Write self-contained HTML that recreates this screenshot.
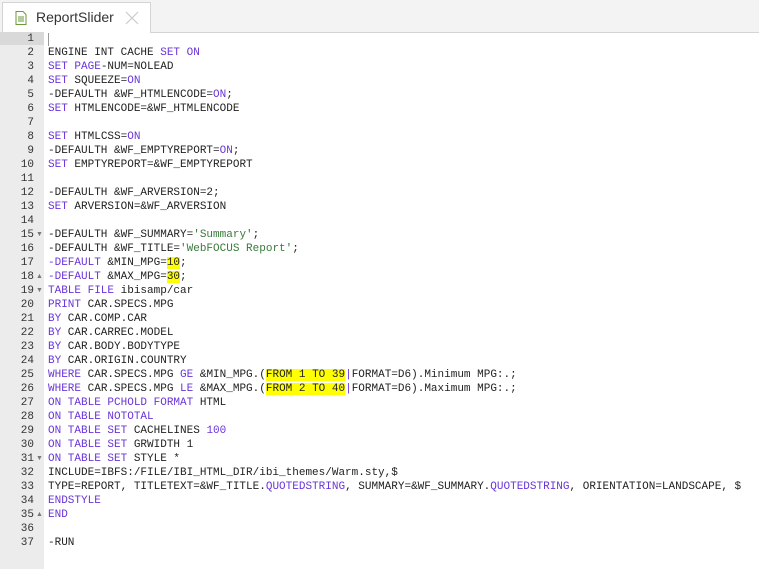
<!DOCTYPE html>
<html><head><meta charset="utf-8"><style>
body{margin:0;width:759px;height:569px;overflow:hidden;background:#fff;font-family:"Liberation Sans",sans-serif}
.bar{position:absolute;left:0;top:0;width:759px;height:32px;background:#f3f3f3;border-bottom:1px solid #d4d4d4}
.tab{position:absolute;left:2px;top:2px;width:149px;height:31px;background:#fff;border:1px solid #d4d4d4;border-bottom:none;box-sizing:border-box}
.tab .t{position:absolute;left:33px;top:6px;font-size:14px;color:#333}
.gut{position:absolute;left:0;top:33px;width:44px;height:536px;background:#ececec}
.hl{position:absolute;left:0;top:32px;width:44px;height:13px;background:#d9d9d9}
pre{margin:0;position:absolute;top:32px;font-family:"Liberation Mono",monospace;font-size:11px;line-height:14px;color:#222}
.n{left:0;width:34px;text-align:right;color:#333}
.c{left:48px;letter-spacing:0}
.k{color:#6a35d8}.s{color:#3a7a3a}.y{background:#ffff00}
.cur{position:absolute;left:48px;top:33px;width:1px;height:13px;background:#999}
.ar{position:absolute;left:36px;font-size:7px;color:#777}
</style></head><body>
<div class="bar"><div class="tab">
<svg style="position:absolute;left:12px;top:8px" width="12" height="14" viewBox="0 0 12 14"><path d="M1 .5h7l3 3v10H1z" fill="#fff" stroke="#6a9a3a"/><path d="M3 6h6M3 8h6M3 10h6" stroke="#6a9a3a"/></svg>
<span class="t">ReportSlider</span>
<svg style="position:absolute;left:122px;top:8px" width="14" height="14"><path d="M1 1l12 12M13 1L1 13" stroke="#ccc" stroke-width="1.2"/></svg>
</div></div>
<div class="gut"></div><div class="hl"></div><div class="cur"></div>
<pre class="n">1
2
3
4
5
6
7
8
9
10
11
12
13
14
15
16
17
18
19
20
21
22
23
24
25
26
27
28
29
30
31
32
33
34
35
36
37</pre>
<span class="ar" style="top:231px">▼</span><span class="ar" style="top:273px">▲</span><span class="ar" style="top:287px">▼</span><span class="ar" style="top:455px">▼</span><span class="ar" style="top:511px">▲</span>
<pre class="c">

ENGINE INT CACHE <span class="k">SET ON</span>
<span class="k">SET PAGE</span>-NUM=NOLEAD
<span class="k">SET</span> SQUEEZE=<span class="k">ON</span>
-DEFAULTH &amp;WF_HTMLENCODE=<span class="k">ON</span>;
<span class="k">SET</span> HTMLENCODE=&amp;WF_HTMLENCODE

<span class="k">SET</span> HTMLCSS=<span class="k">ON</span>
-DEFAULTH &amp;WF_EMPTYREPORT=<span class="k">ON</span>;
<span class="k">SET</span> EMPTYREPORT=&amp;WF_EMPTYREPORT

-DEFAULTH &amp;WF_ARVERSION=2;
<span class="k">SET</span> ARVERSION=&amp;WF_ARVERSION

-DEFAULTH &amp;WF_SUMMARY=<span class="s">'Summary'</span>;
-DEFAULTH &amp;WF_TITLE=<span class="s">'WebFOCUS Report'</span>;
<span class="k">-DEFAULT</span> &amp;MIN_MPG=<span class="y">10</span>;
<span class="k">-DEFAULT</span> &amp;MAX_MPG=<span class="y">30</span>;
<span class="k">TABLE FILE</span> ibisamp/car
<span class="k">PRINT</span> CAR.SPECS.MPG
<span class="k">BY</span> CAR.COMP.CAR
<span class="k">BY</span> CAR.CARREC.MODEL
<span class="k">BY</span> CAR.BODY.BODYTYPE
<span class="k">BY</span> CAR.ORIGIN.COUNTRY
<span class="k">WHERE</span> CAR.SPECS.MPG <span class="k">GE</span> &amp;MIN_MPG.(<span class="y">FROM 1 TO 39</span><span class="k">|</span>FORMAT=D6).Minimum MPG:.;
<span class="k">WHERE</span> CAR.SPECS.MPG <span class="k">LE</span> &amp;MAX_MPG.(<span class="y">FROM 2 TO 40</span><span class="k">|</span>FORMAT=D6).Maximum MPG:.;
<span class="k">ON TABLE PCHOLD FORMAT</span> HTML
<span class="k">ON TABLE NOTOTAL</span>
<span class="k">ON TABLE SET</span> CACHELINES <span class="k">100</span>
<span class="k">ON TABLE SET</span> GRWIDTH 1
<span class="k">ON TABLE SET</span> STYLE *
INCLUDE=IBFS:/FILE/IBI_HTML_DIR/ibi_themes/Warm.sty,$
TYPE=REPORT, TITLETEXT=&amp;WF_TITLE.<span class="k">QUOTEDSTRING</span>, SUMMARY=&amp;WF_SUMMARY.<span class="k">QUOTEDSTRING</span>, ORIENTATION=LANDSCAPE, $
<span class="k">ENDSTYLE</span>
<span class="k">END</span>

-RUN</pre>
</body></html>
